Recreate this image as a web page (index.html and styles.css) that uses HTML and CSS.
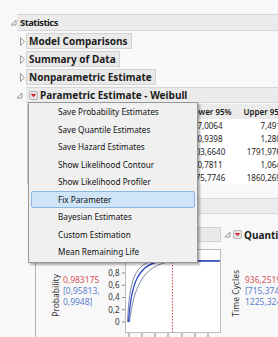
FILE: index.html
```html
<!DOCTYPE html>
<html lang="en">

<head>
  <meta charset="UTF-8">
  <meta name="viewport" content="width=device-width, initial-scale=1.0">
  <title>Statistics</title>
  <link rel="stylesheet" href="styles.css">
</head>

<body>
  <div id="report">
    <div class="row top">
      <svg class="tri" viewBox="0 0 7 7"><polygon points="6,1 6,6 1,6" /></svg>
      <div class="bar">Statistics</div>
    </div>
    <div class="kids">
      <div class="row">
        <svg class="tri shut" viewBox="0 0 7 9"><polygon points="1.5,0.5 5.5,4.5 1.5,8.5" /></svg>
        <div class="box">Model Comparisons</div>
      </div>
      <div class="row">
        <svg class="tri shut" viewBox="0 0 7 9"><polygon points="1.5,0.5 5.5,4.5 1.5,8.5" /></svg>
        <div class="box">Summary of Data</div>
      </div>
      <div class="row">
        <svg class="tri shut" viewBox="0 0 7 9"><polygon points="1.5,0.5 5.5,4.5 1.5,8.5" /></svg>
        <div class="box">Nonparametric Estimate</div>
      </div>
      <div class="row param">
        <svg class="tri" viewBox="0 0 7 7"><polygon points="6,1 6,6 1,6" /></svg>
        <div class="bar">
          <span class="hot"><svg viewBox="0 0 7 7"><polygon points="0.8,2 6.2,2 3.5,5.3" /></svg></span>
          Parametric Estimate - Weibull
        </div>
      </div>

      <div class="pbody">
        <!-- first three columns sit under the popup -->
        <table class="est">
          <tr><th></th><th></th><th></th><th>Lower 95%</th><th>Upper 95%</th></tr>
          <tr><td></td><td></td><td></td><td>7,0064</td><td>7,4918</td></tr>
          <tr><td></td><td></td><td></td><td>0,9398</td><td>1,2804</td></tr>
          <tr><td></td><td></td><td></td><td>1103,6640</td><td>1791,9761</td></tr>
          <tr><td></td><td></td><td></td><td>0,7811</td><td>1,0645</td></tr>
          <tr><td></td><td></td><td></td><td>1175,7746</td><td>1860,2694</td></tr>
        </table>

        <div class="band"></div>

        <div class="profs">
          <div class="prof dist">
            <div class="ptitle"><span class="pbox"></span></div>
            <div class="pgraph">
              <div class="ylab">Probability</div>
              <div class="readout">
                <span class="red">0,983175</span>
                <span class="blue">[0,95813,</span>
                <span class="blue">0,9948]</span>
              </div>
              <svg class="plot" width="119" height="92" viewBox="0 0 119 92">
                <rect x="22.5" y="4.5" width="95" height="83" fill="#fff" stroke="#bdbdbd" />
                <path d="M19 28H22M19 40.25H22M19 52.5H22M19 64.75H22M19 77H22" stroke="#8a8a8a" />
                <path d="M26 88V92M39 88V92M52 88V92M65 88V92M79 88V92M92 88V92M105 88V92" stroke="#8a8a8a" />
                <g class="ticks">
                  <text x="16.5" y="30.8">0,8</text>
                  <text x="16.5" y="43">0,6</text>
                  <text x="16.5" y="55.3">0,4</text>
                  <text x="16.5" y="67.5">0,2</text>
                  <text x="16.5" y="79.8">0</text>
                </g>
                <line x1="69.5" y1="5" x2="69.5" y2="87" stroke="#d9484f" stroke-dasharray="1.5 1.5" />
                <path d="M24.5 77C26.5 36 31 16.5 55 15.8L117 15.6" fill="none" stroke="#7b86a8" />
                <path d="M26.5 77C30.5 46 38 19 70 16.5L117 16.2" fill="none" stroke="#7b86a8" />
                <path d="M25.5 77C28 40 34 17 62 16L117 15.9" fill="none" stroke="#2747c8" stroke-width="1.3" />
              </svg>
            </div>
          </div>
          <div class="prof quant">
            <div class="ptitle">
              <svg class="tri" viewBox="0 0 7 7"><polygon points="6,1 6,6 1,6" /></svg>
              <span class="hot"><svg viewBox="0 0 7 7"><polygon points="0.8,2 6.2,2 3.5,5.3" /></svg></span>
              <b>Quantile Profiler</b>
            </div>
            <div class="pgraph">
              <div class="ylab">Time Cycles</div>
              <div class="readout">
                <span class="red">936,25194</span>
                <span class="blue">[715,3741,</span>
                <span class="blue">1225,3245]</span>
              </div>
            </div>
          </div>
        </div>
      </div>
    </div>
  </div>

  <!-- red hotspot menu -->
  <ul class="popup">
    <li>Save Probability Estimates</li>
    <li>Save Quantile Estimates</li>
    <li>Save Hazard Estimates</li>
    <li>Show Likelihood Contour</li>
    <li>Show Likelihood Profiler</li>
    <li class="hover">Fix Parameter</li>
    <li>Bayesian Estimates</li>
    <li>Custom Estimation</li>
    <li>Mean Remaining Life</li>
  </ul>
</body>

</html>
```

FILE: styles.css
```css
* {
  padding: 0;
  margin: 0;
  box-sizing: border-box;
}

body {
  position: relative;
  width: 278px;
  height: 337px;
  overflow: hidden;
  background: #f8f8f8;
  font-family: "Noto Sans", sans-serif;
  color: #1c1c1c;
}

li {
  list-style: none;
}

#report {
  padding-top: 14px;
}

.row {
  display: flex;
  align-items: center;
  height: 16px;
  margin-bottom: 2px;
  font-size: 10px;
  font-weight: bold;
}

.row.top {
  height: 17px;
  padding-left: 10px;
  font-size: 9.4px;
  letter-spacing: -0.5px;
}

.tri {
  flex: none;
  width: 7px;
  height: 7px;
  fill: #f4f4f4;
  stroke: #9a9a9a;
  stroke-width: 1;
}

.tri.shut {
  height: 9px;
}

.bar {
  flex: 1;
  display: flex;
  align-items: center;
  height: 100%;
  padding-left: 3px;
  background: #ebebeb;
  border-top: 1px solid #d6d6d6;
  border-bottom: 1px solid #d6d6d6;
  white-space: nowrap;
}

.kids {
  padding-left: 19px;
}

.box {
  height: 16px;
  line-height: 14px;
  padding: 0 3px 0 2px;
  background: #e9e9e9;
  border: 1px solid #d3d3d3;
  white-space: nowrap;
}

.row.param {
  margin-left: -3px;
  margin-bottom: 0;
}

.row.param .tri {
  margin-right: 3px;
}

.hot {
  flex: none;
  display: inline-flex;
  align-items: center;
  justify-content: center;
  width: 9px;
  height: 9px;
  margin-right: 2px;
  background: #e4e4e4;
  border: 1px solid #b9b9b9;
  border-radius: 2px;
}

.hot svg {
  width: 7px;
  height: 7px;
  fill: #d8232a;
}

.pbody {
  padding-left: 8px;
  padding-top: 1px;
}

.est {
  table-layout: fixed;
  width: 273px;
  border-collapse: collapse;
  background: #fff;
  border-left: 1px solid #c4c4c4;
  font-size: 8px;
  white-space: nowrap;
}

.est th {
  height: 15px;
  background: #ebebeb;
  font-weight: 600;
  text-align: center;
}

.est td {
  height: 13px;
  text-align: right;
  padding-right: 10px;
}

.est th:nth-child(1) { width: 62px; }
.est th:nth-child(2) { width: 50px; }
.est th:nth-child(3) { width: 47px; }
.est th:nth-child(4) { width: 46px; padding-left: 2px; }
.est th:nth-child(5) { width: 68px; text-align: left; padding-left: 11px; }

.est td:nth-child(5) {
  padding-right: 15px;
}

.band {
  height: 16px;
  margin-top: 14px;
  margin-left: 3px;
  background: #ececec;
  border-top: 1px solid #dadada;
  border-bottom: 1px solid #dadada;
}

.profs {
  display: flex;
  margin-top: 8px;
}

.prof.dist {
  width: 189px;
  margin-left: 8px;
  border-left: 1px solid #b3b3b3;
  padding-top: 5px;
}

.ptitle {
  display: flex;
  align-items: center;
  height: 15px;
  font-size: 10px;
  white-space: nowrap;
}

.pbox {
  height: 15px;
  width: 184px;
  margin-left: 1px;
  background: #e9e9e9;
  border: 1px solid #d0d0d0;
}

.pgraph {
  display: flex;
  align-items: flex-start;
  height: 95px;
}

.ylab {
  writing-mode: vertical-rl;
  transform: rotate(180deg);
  width: 12px;
  margin-top: 32px;
  font-size: 8.5px;
  line-height: 12px;
  color: #333;
}

.dist .ylab {
  margin-left: 14px;
}

.readout {
  display: flex;
  flex-direction: column;
  margin-left: 1px;
  margin-top: 32px;
  width: 40px;
  font-size: 8.5px;
  line-height: 11px;
  white-space: nowrap;
}

.red {
  color: #d8545b;
}

.blue {
  color: #5b80d0;
}

.plot {
  flex: none;
  margin-top: 3px;
}

.ticks {
  font-family: "Noto Sans", sans-serif;
  font-size: 8px;
  text-anchor: end;
  fill: #333;
}

.prof.quant {
  flex: 1;
  padding-top: 5px;
  padding-left: 2px;
}

.quant .ptitle .tri {
  margin-right: 2px;
}

.quant .ylab {
  margin-left: 6px;
  margin-top: 28px;
}

.quant .readout {
  margin-left: 3px;
}

/* popup menu */
.popup {
  position: absolute;
  left: 28px;
  top: 102px;
  width: 170px;
  padding: 0 2px 1px;
  background: #f0f0f0;
  border: 1px solid #979797;
  box-shadow: 2px 2px 2px rgba(0, 0, 0, .3);
}

.popup li {
  height: 17.5px;
  line-height: 15.5px;
  padding-left: 26px;
  font-size: 8.2px;
  color: #111;
  border: 1px solid transparent;
  border-radius: 2px;
  white-space: nowrap;
}

.popup li.hover {
  background: #cfe4f6;
  border-color: #8ab8e0;
}
```
